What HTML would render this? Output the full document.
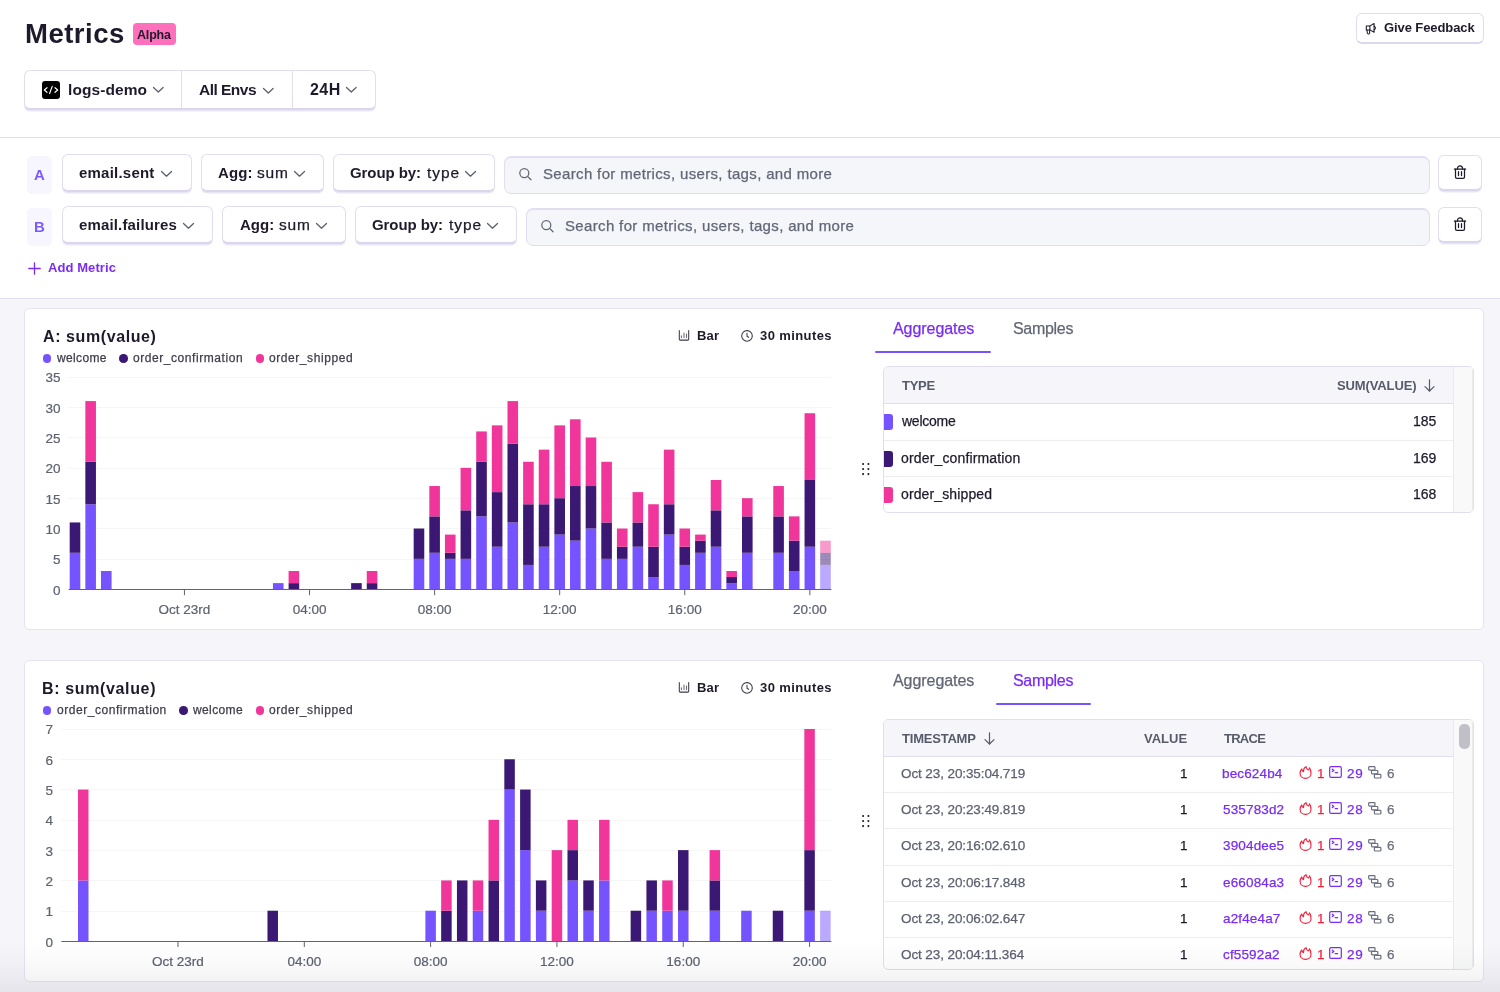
<!DOCTYPE html><html><head><meta charset="utf-8"><style>
*{box-sizing:border-box;margin:0;padding:0}
html,body{width:1500px;height:992px;overflow:hidden;background:#fff;font-family:"Liberation Sans",sans-serif;color:#2b2233}
.t{position:absolute;white-space:nowrap;will-change:transform}
.b{position:absolute}
.btn{position:absolute;background:#fff;border:1px solid #e2def0;border-bottom:2px solid #dcd6ec;border-radius:6px;box-shadow:0 1.5px 0 rgba(215,208,235,0.55)}
svg{position:absolute;overflow:visible}
</style></head><body><div class="t" style="left:24.75px;top:20px;font-size:27.5px;line-height:27.5px;font-weight:bold;color:#1e1a2b;letter-spacing:0.500px;">Metrics</div>
<div class="b" style="left:133px;top:23px;width:43px;height:22px;background:#ff70bc;border-radius:4px"></div>
<div class="t" style="left:137.15px;top:29px;font-size:12.5px;line-height:12.5px;font-weight:bold;color:#1e1a2b;letter-spacing:-0.181px;">Alpha</div>
<div class="b" style="left:1356px;top:13px;width:128px;height:31px;background:#fff;border:1px solid #e2def0;border-bottom:2px solid #dcd7ec;border-radius:6px"></div>
<svg style="left:1365px;top:22px" width="13" height="13" viewBox="0 0 13 13"><g fill="none" stroke="#1e1a2b" stroke-width="1.05" stroke-linejoin="round" stroke-linecap="round"><path d="M1.3 3.9 H4.9 V7.9 H1.3 Z"/><path d="M4.9 3.9 L9.1 1.5 V10.3 L4.9 7.9"/><path d="M9.1 4.2 Q11.8 6 9.1 7.8"/><path d="M1.9 7.9 L2.4 11.4 Q2.6 11.9 3.1 11.9 H3.9 Q4.6 11.9 4.6 11.3 L4.6 7.9"/></g></svg>
<div class="t" style="left:1384.00px;top:21px;font-size:13px;line-height:13px;font-weight:bold;color:#1e1a2b;letter-spacing:-0.087px;">Give Feedback</div>
<div class="btn" style="left:24px;top:70px;width:352px;height:40px"></div>
<div class="b" style="left:181px;top:71px;width:1px;height:37px;background:#e2def0"></div>
<div class="b" style="left:292px;top:71px;width:1px;height:37px;background:#e2def0"></div>
<svg style="left:42px;top:81px" width="18" height="18" viewBox="0 0 18 18"><rect x="0" y="0" width="18" height="18" rx="3" fill="#000"/><g fill="none" stroke="#fff" stroke-width="1.15" stroke-linecap="round" stroke-linejoin="round"><path d="M5 6.7 L2.3 9 L5 11.3"/><path d="M13 6.7 L15.7 9 L13 11.3"/><path d="M10.2 5.4 L7.6 12.5"/></g></svg>
<div class="t" style="left:67.50px;top:82px;font-size:15.5px;line-height:15.5px;font-weight:bold;color:#1e1a2b;letter-spacing:0.081px;">logs-demo</div>
<svg style="left:152.5px;top:87.35px" width="10.6" height="5.3" viewBox="0 0 10.6 5.3"><path d="M0.5 0.5 L5.3 5.0 L10.1 0.5" fill="none" stroke="#5b5d6b" stroke-width="1.25" stroke-linecap="round" stroke-linejoin="round"/></svg>
<div class="t" style="left:199.12px;top:82px;font-size:15.5px;line-height:15.5px;font-weight:bold;color:#1e1a2b;letter-spacing:-0.518px;">All Envs</div>
<svg style="left:263px;top:87.55px" width="10.6" height="5.3" viewBox="0 0 10.6 5.3"><path d="M0.5 0.5 L5.3 5.0 L10.1 0.5" fill="none" stroke="#5b5d6b" stroke-width="1.25" stroke-linecap="round" stroke-linejoin="round"/></svg>
<div class="t" style="left:309.50px;top:82px;font-size:16px;line-height:16px;font-weight:bold;color:#1e1a2b;letter-spacing:0.475px;">24H</div>
<svg style="left:346px;top:87.35px" width="10.6" height="5.3" viewBox="0 0 10.6 5.3"><path d="M0.5 0.5 L5.3 5.0 L10.1 0.5" fill="none" stroke="#5b5d6b" stroke-width="1.25" stroke-linecap="round" stroke-linejoin="round"/></svg>
<div class="b" style="left:0;top:137px;width:1500px;height:1px;background:#e2def0"></div>
<div class="b" style="left:27px;top:156px;width:25px;height:38px;background:#f7f5fd;border-radius:5px"></div>
<div class="t" style="left:34.33px;top:167px;font-size:15px;line-height:15px;font-weight:bold;color:#7b5cfa;letter-spacing:0.000px;">A</div>
<div class="btn" style="left:62px;top:154px;width:130px;height:38px"></div>
<div class="t" style="left:78.80px;top:165px;font-size:15px;line-height:15px;font-weight:bold;color:#1e1a2b;letter-spacing:0.217px;">email.sent</div>
<svg style="left:161px;top:170.75px" width="11" height="5.5" viewBox="0 0 11 5.5"><path d="M0.5 0.5 L5.5 5.2 L10.5 0.5" fill="none" stroke="#5b5d6b" stroke-width="1.25" stroke-linecap="round" stroke-linejoin="round"/></svg>
<div class="btn" style="left:201px;top:154px;width:123px;height:38px"></div>
<div class="t" style="left:217.53px;top:165px;font-size:15px;line-height:15px;font-weight:bold;color:#1e1a2b;letter-spacing:0.075px;">Agg:</div>
<div class="t" style="left:257.23px;top:165px;font-size:15.5px;line-height:15.5px;-webkit-text-stroke:0.25px #1e1a2b;color:#1e1a2b;letter-spacing:0.762px;">sum</div>
<svg style="left:294px;top:170.75px" width="11" height="5.5" viewBox="0 0 11 5.5"><path d="M0.5 0.5 L5.5 5.2 L10.5 0.5" fill="none" stroke="#5b5d6b" stroke-width="1.25" stroke-linecap="round" stroke-linejoin="round"/></svg>
<div class="btn" style="left:333px;top:154px;width:162px;height:38px"></div>
<div class="t" style="left:349.88px;top:165px;font-size:15px;line-height:15px;font-weight:bold;color:#1e1a2b;letter-spacing:-0.078px;">Group by:</div>
<div class="t" style="left:426.75px;top:165px;font-size:15.5px;line-height:15.5px;-webkit-text-stroke:0.25px #1e1a2b;color:#1e1a2b;letter-spacing:0.975px;">type</div>
<svg style="left:465.3px;top:170.75px" width="11" height="5.5" viewBox="0 0 11 5.5"><path d="M0.5 0.5 L5.5 5.2 L10.5 0.5" fill="none" stroke="#5b5d6b" stroke-width="1.25" stroke-linecap="round" stroke-linejoin="round"/></svg>
<div class="b" style="left:504px;top:156px;width:926px;height:38px;background:#f5f6fa;border:1px solid #e2def0;border-radius:7px;box-shadow:inset 0 1px 0 rgba(200,190,235,0.45)"></div>
<svg style="left:519px;top:168px" width="14" height="14" viewBox="0 0 14 14"><g fill="none" stroke="#626675" stroke-width="1.25" stroke-linecap="round"><circle cx="5.3" cy="5.1" r="4.5"/><path d="M8.6 8.4 L12 11.8"/></g></svg>
<div class="t" style="left:543.38px;top:166px;font-size:15px;line-height:15px;-webkit-text-stroke:0.25px #626675;color:#626675;letter-spacing:0.346px;">Search for metrics, users, tags, and more</div>
<div class="btn" style="left:1438px;top:155px;width:44px;height:35.5px"></div>
<svg style="left:1453px;top:164px" width="14" height="15" viewBox="0 0 14 15"><g fill="none" stroke="#1e1a2b" stroke-width="1.25" stroke-linecap="round" stroke-linejoin="round"><path d="M1.3 5 H12.7"/><path d="M4.4 5 C4.4 0.9 9.6 0.9 9.6 5"/><path d="M2.5 5 V12.9 Q2.5 14.3 3.9 14.3 H10.1 Q11.5 14.3 11.5 12.9 V5"/><path d="M5.5 7.7 V11.5 M8.5 7.7 V11.5"/></g></svg>
<div class="b" style="left:27px;top:208px;width:25px;height:38px;background:#f7f5fd;border-radius:5px"></div>
<div class="t" style="left:33.70px;top:219px;font-size:15px;line-height:15px;font-weight:bold;color:#7b5cfa;letter-spacing:0.000px;">B</div>
<div class="btn" style="left:62px;top:206px;width:151px;height:38px"></div>
<div class="t" style="left:78.80px;top:217px;font-size:15px;line-height:15px;font-weight:bold;color:#1e1a2b;letter-spacing:0.150px;">email.failures</div>
<svg style="left:183px;top:222.75px" width="11" height="5.5" viewBox="0 0 11 5.5"><path d="M0.5 0.5 L5.5 5.2 L10.5 0.5" fill="none" stroke="#5b5d6b" stroke-width="1.25" stroke-linecap="round" stroke-linejoin="round"/></svg>
<div class="btn" style="left:222px;top:206px;width:124px;height:38px"></div>
<div class="t" style="left:239.62px;top:217px;font-size:15px;line-height:15px;font-weight:bold;color:#1e1a2b;letter-spacing:0.042px;">Agg:</div>
<div class="t" style="left:279.23px;top:217px;font-size:15.5px;line-height:15.5px;-webkit-text-stroke:0.25px #1e1a2b;color:#1e1a2b;letter-spacing:0.762px;">sum</div>
<svg style="left:316px;top:222.75px" width="11" height="5.5" viewBox="0 0 11 5.5"><path d="M0.5 0.5 L5.5 5.2 L10.5 0.5" fill="none" stroke="#5b5d6b" stroke-width="1.25" stroke-linecap="round" stroke-linejoin="round"/></svg>
<div class="btn" style="left:355px;top:206px;width:162px;height:38px"></div>
<div class="t" style="left:371.88px;top:217px;font-size:15px;line-height:15px;font-weight:bold;color:#1e1a2b;letter-spacing:-0.078px;">Group by:</div>
<div class="t" style="left:448.75px;top:217px;font-size:15.5px;line-height:15.5px;-webkit-text-stroke:0.25px #1e1a2b;color:#1e1a2b;letter-spacing:0.975px;">type</div>
<svg style="left:487.3px;top:222.75px" width="11" height="5.5" viewBox="0 0 11 5.5"><path d="M0.5 0.5 L5.5 5.2 L10.5 0.5" fill="none" stroke="#5b5d6b" stroke-width="1.25" stroke-linecap="round" stroke-linejoin="round"/></svg>
<div class="b" style="left:526px;top:208px;width:904px;height:38px;background:#f5f6fa;border:1px solid #e2def0;border-radius:7px;box-shadow:inset 0 1px 0 rgba(200,190,235,0.45)"></div>
<svg style="left:541px;top:220px" width="14" height="14" viewBox="0 0 14 14"><g fill="none" stroke="#626675" stroke-width="1.25" stroke-linecap="round"><circle cx="5.3" cy="5.1" r="4.5"/><path d="M8.6 8.4 L12 11.8"/></g></svg>
<div class="t" style="left:565.38px;top:218px;font-size:15px;line-height:15px;-webkit-text-stroke:0.25px #626675;color:#626675;letter-spacing:0.346px;">Search for metrics, users, tags, and more</div>
<div class="btn" style="left:1438px;top:207px;width:44px;height:35.5px"></div>
<svg style="left:1453px;top:216px" width="14" height="15" viewBox="0 0 14 15"><g fill="none" stroke="#1e1a2b" stroke-width="1.25" stroke-linecap="round" stroke-linejoin="round"><path d="M1.3 5 H12.7"/><path d="M4.4 5 C4.4 0.9 9.6 0.9 9.6 5"/><path d="M2.5 5 V12.9 Q2.5 14.3 3.9 14.3 H10.1 Q11.5 14.3 11.5 12.9 V5"/><path d="M5.5 7.7 V11.5 M8.5 7.7 V11.5"/></g></svg>
<svg style="left:28px;top:261.5px" width="13" height="13" viewBox="0 0 13 13"><path d="M6.5 0.8 V12.2 M0.8 6.5 H12.2" stroke="#7a2cf2" stroke-width="1.3" stroke-linecap="round"/></svg>
<div class="t" style="left:48.12px;top:261px;font-size:13px;line-height:13px;font-weight:bold;color:#7a2cf2;letter-spacing:0.078px;">Add Metric</div>
<div class="b" style="left:0;top:298px;width:1500px;height:1px;background:#e2def0"></div>
<div class="b" style="left:0;top:299px;width:1500px;height:693px;background:#f6f5fa"></div>
<div class="b" style="left:24px;top:308px;width:1460px;height:322px;background:#fff;border:1px solid #e6e3f1;border-radius:5px"></div>
<div class="t" style="left:42.52px;top:329px;font-size:16px;line-height:16px;font-weight:bold;color:#1e1a2b;letter-spacing:0.587px;">A: sum(value)</div>
<div class="b" style="left:42.9px;top:354px;width:8.6px;height:8.6px;border-radius:50%;background:#7553ff"></div>
<div class="t" style="left:57.00px;top:352px;font-size:12px;line-height:12px;-webkit-text-stroke:0.25px #3f3d4b;color:#3f3d4b;letter-spacing:0.358px;">welcome</div>
<div class="b" style="left:119.4px;top:354px;width:8.6px;height:8.6px;border-radius:50%;background:#3a1873"></div>
<div class="t" style="left:133.00px;top:352px;font-size:12px;line-height:12px;-webkit-text-stroke:0.25px #3f3d4b;color:#3f3d4b;letter-spacing:0.562px;">order_confirmation</div>
<div class="b" style="left:255.6px;top:354px;width:8.6px;height:8.6px;border-radius:50%;background:#f0369a"></div>
<div class="t" style="left:268.90px;top:352px;font-size:12px;line-height:12px;-webkit-text-stroke:0.25px #3f3d4b;color:#3f3d4b;letter-spacing:0.569px;">order_shipped</div>
<svg style="left:678px;top:330px" width="12" height="11" viewBox="0 0 12 11"><g fill="none" stroke="#3b3847" stroke-width="1.05" stroke-linecap="round" stroke-linejoin="round"><path d="M1.3 0.5 V9.3 Q1.3 10.1 2.1 10.1 H9.9 Q10.7 10.1 10.7 9.3 V0.5"/><path d="M3.4 5.8 V7.6 M6 2.9 V7.6 M8.5 4.1 V7.6" stroke="#6b6a78"/></g></svg>
<div class="t" style="left:696.92px;top:329px;font-size:13px;line-height:13px;font-weight:bold;color:#1e1a2b;letter-spacing:0.138px;">Bar</div>
<svg style="left:741px;top:329.5px" width="12" height="12" viewBox="0 0 12 12"><g fill="none" stroke="#3b3847" stroke-width="1.05" stroke-linecap="round" stroke-linejoin="round"><circle cx="6" cy="5.9" r="5.3"/><path d="M6 3.2 V6.2 L7.6 7.2"/></g></svg>
<div class="t" style="left:759.95px;top:329px;font-size:13px;line-height:13px;font-weight:bold;color:#1e1a2b;letter-spacing:0.397px;">30 minutes</div>
<svg style="left:0;top:0" width="1500" height="992" viewBox="0 0 1500 992"><text x="60.5" y="594.70" text-anchor="end" font-size="13.5" fill="#5d6170" stroke="#5d6170" stroke-width="0.2" font-family="Liberation Sans">0</text><line x1="68.7" x2="831.3" y1="559.50" y2="559.50" stroke="#f5f6f5" stroke-width="1"/><text x="60.5" y="564.36" text-anchor="end" font-size="13.5" fill="#5d6170" stroke="#5d6170" stroke-width="0.2" font-family="Liberation Sans">5</text><line x1="68.7" x2="831.3" y1="528.50" y2="528.50" stroke="#f5f6f5" stroke-width="1"/><text x="60.5" y="534.02" text-anchor="end" font-size="13.5" fill="#5d6170" stroke="#5d6170" stroke-width="0.2" font-family="Liberation Sans">10</text><line x1="68.7" x2="831.3" y1="498.50" y2="498.50" stroke="#f5f6f5" stroke-width="1"/><text x="60.5" y="503.68" text-anchor="end" font-size="13.5" fill="#5d6170" stroke="#5d6170" stroke-width="0.2" font-family="Liberation Sans">15</text><line x1="68.7" x2="831.3" y1="468.50" y2="468.50" stroke="#f5f6f5" stroke-width="1"/><text x="60.5" y="473.34" text-anchor="end" font-size="13.5" fill="#5d6170" stroke="#5d6170" stroke-width="0.2" font-family="Liberation Sans">20</text><line x1="68.7" x2="831.3" y1="437.50" y2="437.50" stroke="#f5f6f5" stroke-width="1"/><text x="60.5" y="443.00" text-anchor="end" font-size="13.5" fill="#5d6170" stroke="#5d6170" stroke-width="0.2" font-family="Liberation Sans">25</text><line x1="68.7" x2="831.3" y1="407.50" y2="407.50" stroke="#f5f6f5" stroke-width="1"/><text x="60.5" y="412.66" text-anchor="end" font-size="13.5" fill="#5d6170" stroke="#5d6170" stroke-width="0.2" font-family="Liberation Sans">30</text><line x1="68.7" x2="831.3" y1="377.50" y2="377.50" stroke="#f5f6f5" stroke-width="1"/><text x="60.5" y="382.32" text-anchor="end" font-size="13.5" fill="#5d6170" stroke="#5d6170" stroke-width="0.2" font-family="Liberation Sans">35</text><rect x="69.70" y="552.79" width="10.6" height="36.41" fill="#7553ff" fill-opacity="1"/><rect x="69.70" y="522.45" width="10.6" height="30.34" fill="#3a1873" fill-opacity="1"/><rect x="85.34" y="504.25" width="10.6" height="84.95" fill="#7553ff" fill-opacity="1"/><rect x="85.34" y="461.77" width="10.6" height="42.48" fill="#3a1873" fill-opacity="1"/><rect x="85.34" y="401.09" width="10.6" height="60.68" fill="#f0369a" fill-opacity="1"/><rect x="100.97" y="571.00" width="10.6" height="18.20" fill="#7553ff" fill-opacity="1"/><rect x="272.95" y="583.13" width="10.6" height="6.07" fill="#7553ff" fill-opacity="1"/><rect x="288.59" y="583.13" width="10.6" height="6.07" fill="#3a1873" fill-opacity="1"/><rect x="288.59" y="571.00" width="10.6" height="12.14" fill="#f0369a" fill-opacity="1"/><rect x="351.13" y="583.13" width="10.6" height="6.07" fill="#3a1873" fill-opacity="1"/><rect x="366.76" y="583.13" width="10.6" height="6.07" fill="#3a1873" fill-opacity="1"/><rect x="366.76" y="571.00" width="10.6" height="12.14" fill="#f0369a" fill-opacity="1"/><rect x="413.67" y="558.86" width="10.6" height="30.34" fill="#7553ff" fill-opacity="1"/><rect x="413.67" y="528.52" width="10.6" height="30.34" fill="#3a1873" fill-opacity="1"/><rect x="429.31" y="552.79" width="10.6" height="36.41" fill="#7553ff" fill-opacity="1"/><rect x="429.31" y="516.38" width="10.6" height="36.41" fill="#3a1873" fill-opacity="1"/><rect x="429.31" y="486.04" width="10.6" height="30.34" fill="#f0369a" fill-opacity="1"/><rect x="444.94" y="558.86" width="10.6" height="30.34" fill="#7553ff" fill-opacity="1"/><rect x="444.94" y="552.79" width="10.6" height="6.07" fill="#3a1873" fill-opacity="1"/><rect x="444.94" y="534.59" width="10.6" height="18.20" fill="#f0369a" fill-opacity="1"/><rect x="460.57" y="558.86" width="10.6" height="30.34" fill="#7553ff" fill-opacity="1"/><rect x="460.57" y="510.32" width="10.6" height="48.54" fill="#3a1873" fill-opacity="1"/><rect x="460.57" y="467.84" width="10.6" height="42.48" fill="#f0369a" fill-opacity="1"/><rect x="476.21" y="516.38" width="10.6" height="72.82" fill="#7553ff" fill-opacity="1"/><rect x="476.21" y="461.77" width="10.6" height="54.61" fill="#3a1873" fill-opacity="1"/><rect x="476.21" y="431.43" width="10.6" height="30.34" fill="#f0369a" fill-opacity="1"/><rect x="491.84" y="546.72" width="10.6" height="42.48" fill="#7553ff" fill-opacity="1"/><rect x="491.84" y="492.11" width="10.6" height="54.61" fill="#3a1873" fill-opacity="1"/><rect x="491.84" y="425.36" width="10.6" height="66.75" fill="#f0369a" fill-opacity="1"/><rect x="507.48" y="522.45" width="10.6" height="66.75" fill="#7553ff" fill-opacity="1"/><rect x="507.48" y="443.57" width="10.6" height="78.88" fill="#3a1873" fill-opacity="1"/><rect x="507.48" y="401.09" width="10.6" height="42.48" fill="#f0369a" fill-opacity="1"/><rect x="523.12" y="564.93" width="10.6" height="24.27" fill="#7553ff" fill-opacity="1"/><rect x="523.12" y="504.25" width="10.6" height="60.68" fill="#3a1873" fill-opacity="1"/><rect x="523.12" y="461.77" width="10.6" height="42.48" fill="#f0369a" fill-opacity="1"/><rect x="538.75" y="546.72" width="10.6" height="42.48" fill="#7553ff" fill-opacity="1"/><rect x="538.75" y="504.25" width="10.6" height="42.48" fill="#3a1873" fill-opacity="1"/><rect x="538.75" y="449.64" width="10.6" height="54.61" fill="#f0369a" fill-opacity="1"/><rect x="554.38" y="534.59" width="10.6" height="54.61" fill="#7553ff" fill-opacity="1"/><rect x="554.38" y="498.18" width="10.6" height="36.41" fill="#3a1873" fill-opacity="1"/><rect x="554.38" y="425.36" width="10.6" height="72.82" fill="#f0369a" fill-opacity="1"/><rect x="570.02" y="540.66" width="10.6" height="48.54" fill="#7553ff" fill-opacity="1"/><rect x="570.02" y="486.04" width="10.6" height="54.61" fill="#3a1873" fill-opacity="1"/><rect x="570.02" y="419.30" width="10.6" height="66.75" fill="#f0369a" fill-opacity="1"/><rect x="585.66" y="528.52" width="10.6" height="60.68" fill="#7553ff" fill-opacity="1"/><rect x="585.66" y="486.04" width="10.6" height="42.48" fill="#3a1873" fill-opacity="1"/><rect x="585.66" y="437.50" width="10.6" height="48.54" fill="#f0369a" fill-opacity="1"/><rect x="601.29" y="558.86" width="10.6" height="30.34" fill="#7553ff" fill-opacity="1"/><rect x="601.29" y="522.45" width="10.6" height="36.41" fill="#3a1873" fill-opacity="1"/><rect x="601.29" y="461.77" width="10.6" height="60.68" fill="#f0369a" fill-opacity="1"/><rect x="616.93" y="558.86" width="10.6" height="30.34" fill="#7553ff" fill-opacity="1"/><rect x="616.93" y="546.72" width="10.6" height="12.14" fill="#3a1873" fill-opacity="1"/><rect x="616.93" y="528.52" width="10.6" height="18.20" fill="#f0369a" fill-opacity="1"/><rect x="632.56" y="546.72" width="10.6" height="42.48" fill="#7553ff" fill-opacity="1"/><rect x="632.56" y="522.45" width="10.6" height="24.27" fill="#3a1873" fill-opacity="1"/><rect x="632.56" y="492.11" width="10.6" height="30.34" fill="#f0369a" fill-opacity="1"/><rect x="648.20" y="577.06" width="10.6" height="12.14" fill="#7553ff" fill-opacity="1"/><rect x="648.20" y="546.72" width="10.6" height="30.34" fill="#3a1873" fill-opacity="1"/><rect x="648.20" y="504.25" width="10.6" height="42.48" fill="#f0369a" fill-opacity="1"/><rect x="663.83" y="534.59" width="10.6" height="54.61" fill="#7553ff" fill-opacity="1"/><rect x="663.83" y="504.25" width="10.6" height="30.34" fill="#3a1873" fill-opacity="1"/><rect x="663.83" y="449.64" width="10.6" height="54.61" fill="#f0369a" fill-opacity="1"/><rect x="679.47" y="564.93" width="10.6" height="24.27" fill="#7553ff" fill-opacity="1"/><rect x="679.47" y="546.72" width="10.6" height="18.20" fill="#3a1873" fill-opacity="1"/><rect x="679.47" y="528.52" width="10.6" height="18.20" fill="#f0369a" fill-opacity="1"/><rect x="695.10" y="552.79" width="10.6" height="36.41" fill="#7553ff" fill-opacity="1"/><rect x="695.10" y="540.66" width="10.6" height="12.14" fill="#3a1873" fill-opacity="1"/><rect x="695.10" y="534.59" width="10.6" height="6.07" fill="#f0369a" fill-opacity="1"/><rect x="710.74" y="546.72" width="10.6" height="42.48" fill="#7553ff" fill-opacity="1"/><rect x="710.74" y="510.32" width="10.6" height="36.41" fill="#3a1873" fill-opacity="1"/><rect x="710.74" y="479.98" width="10.6" height="30.34" fill="#f0369a" fill-opacity="1"/><rect x="726.37" y="583.13" width="10.6" height="6.07" fill="#7553ff" fill-opacity="1"/><rect x="726.37" y="577.06" width="10.6" height="6.07" fill="#3a1873" fill-opacity="1"/><rect x="726.37" y="571.00" width="10.6" height="6.07" fill="#f0369a" fill-opacity="1"/><rect x="742.00" y="552.79" width="10.6" height="36.41" fill="#7553ff" fill-opacity="1"/><rect x="742.00" y="516.38" width="10.6" height="36.41" fill="#3a1873" fill-opacity="1"/><rect x="742.00" y="498.18" width="10.6" height="18.20" fill="#f0369a" fill-opacity="1"/><rect x="773.28" y="552.79" width="10.6" height="36.41" fill="#7553ff" fill-opacity="1"/><rect x="773.28" y="516.38" width="10.6" height="36.41" fill="#3a1873" fill-opacity="1"/><rect x="773.28" y="486.04" width="10.6" height="30.34" fill="#f0369a" fill-opacity="1"/><rect x="788.91" y="571.00" width="10.6" height="18.20" fill="#7553ff" fill-opacity="1"/><rect x="788.91" y="540.66" width="10.6" height="30.34" fill="#3a1873" fill-opacity="1"/><rect x="788.91" y="516.38" width="10.6" height="24.27" fill="#f0369a" fill-opacity="1"/><rect x="804.55" y="546.72" width="10.6" height="42.48" fill="#7553ff" fill-opacity="1"/><rect x="804.55" y="479.98" width="10.6" height="66.75" fill="#3a1873" fill-opacity="1"/><rect x="804.55" y="413.23" width="10.6" height="66.75" fill="#f0369a" fill-opacity="1"/><rect x="820.18" y="564.93" width="10.6" height="24.27" fill="#7553ff" fill-opacity="0.5"/><rect x="820.18" y="552.79" width="10.6" height="12.14" fill="#3a1873" fill-opacity="0.5"/><rect x="820.18" y="540.66" width="10.6" height="12.14" fill="#f0369a" fill-opacity="0.5"/><line x1="68.7" x2="831.3" y1="589.50" y2="589.50" stroke="#5f6372" stroke-width="1"/><line x1="184.44" x2="184.44" y1="589.20" y2="595.20" stroke="#5f6372" stroke-width="1"/><text x="184.44" y="613.70" text-anchor="middle" font-size="13.5" fill="#5d6170" stroke="#5d6170" stroke-width="0.2" font-family="Liberation Sans">Oct 23rd</text><line x1="309.53" x2="309.53" y1="589.20" y2="595.20" stroke="#5f6372" stroke-width="1"/><text x="309.53" y="613.70" text-anchor="middle" font-size="13.5" fill="#5d6170" stroke="#5d6170" stroke-width="0.2" font-family="Liberation Sans">04:00</text><line x1="434.61" x2="434.61" y1="589.20" y2="595.20" stroke="#5f6372" stroke-width="1"/><text x="434.61" y="613.70" text-anchor="middle" font-size="13.5" fill="#5d6170" stroke="#5d6170" stroke-width="0.2" font-family="Liberation Sans">08:00</text><line x1="559.68" x2="559.68" y1="589.20" y2="595.20" stroke="#5f6372" stroke-width="1"/><text x="559.68" y="613.70" text-anchor="middle" font-size="13.5" fill="#5d6170" stroke="#5d6170" stroke-width="0.2" font-family="Liberation Sans">12:00</text><line x1="684.76" x2="684.76" y1="589.20" y2="595.20" stroke="#5f6372" stroke-width="1"/><text x="684.76" y="613.70" text-anchor="middle" font-size="13.5" fill="#5d6170" stroke="#5d6170" stroke-width="0.2" font-family="Liberation Sans">16:00</text><line x1="809.85" x2="809.85" y1="589.20" y2="595.20" stroke="#5f6372" stroke-width="1"/><text x="809.85" y="613.70" text-anchor="middle" font-size="13.5" fill="#5d6170" stroke="#5d6170" stroke-width="0.2" font-family="Liberation Sans">20:00</text></svg>
<svg style="left:0;top:0" width="1500" height="992"><circle cx="863.1" cy="464.0" r="1.05" fill="#1e1a2b"/><circle cx="863.1" cy="469.05" r="1.05" fill="#1e1a2b"/><circle cx="863.1" cy="474.1" r="1.05" fill="#1e1a2b"/><circle cx="868.4" cy="464.0" r="1.05" fill="#1e1a2b"/><circle cx="868.4" cy="469.05" r="1.05" fill="#1e1a2b"/><circle cx="868.4" cy="474.1" r="1.05" fill="#1e1a2b"/></svg>
<div class="t" style="left:892.50px;top:321px;font-size:16px;line-height:16px;-webkit-text-stroke:0.25px #7a2cf2;color:#7a2cf2;letter-spacing:-0.064px;">Aggregates</div>
<div class="t" style="left:1012.55px;top:321px;font-size:16px;line-height:16px;-webkit-text-stroke:0.25px #626675;color:#626675;letter-spacing:-0.300px;">Samples</div>
<div class="b" style="left:875px;top:350.8px;width:116px;height:2.4px;border-radius:1px;background:#7553ff"></div>
<div class="b" style="left:883px;top:366px;width:591px;height:147px;border:1px solid #e2def0;border-radius:5px;background:#fff;overflow:hidden"><div class="b" style="left:0;top:0;width:589px;height:37px;background:#f6f5fa;border-bottom:1px solid #e2def0"></div><div class="b" style="left:569px;top:0;width:20px;height:147px;background:#f8f9f8;border-left:1.5px solid #ebebee;border-right:1px solid #ececef"></div></div>
<div class="t" style="left:902.27px;top:379px;font-size:13px;line-height:13px;font-weight:bold;color:#575b69;letter-spacing:-0.292px;">TYPE</div>
<div class="t" style="left:1336.92px;top:379px;font-size:13px;line-height:13px;font-weight:bold;color:#575b69;letter-spacing:-0.117px;">SUM(VALUE)</div>
<svg style="left:1423.7px;top:378.5px" width="11" height="13" viewBox="0 0 11 13"><g fill="none" stroke="#575b69" stroke-width="1.2" stroke-linecap="round" stroke-linejoin="round"><path d="M5.5 0.8 V12"/><path d="M1 7.6 L5.5 12 L10 7.6"/></g></svg>
<div class="b" style="left:884px;top:414.2px;width:9px;height:15.7px;border-radius:0 3px 3px 0;background:#7553ff"></div>
<div class="t" style="left:901.80px;top:414px;font-size:14px;line-height:14px;-webkit-text-stroke:0.25px #1e1a2b;color:#1e1a2b;letter-spacing:-0.242px;">welcome</div>
<div class="t" style="left:1412.62px;top:414px;font-size:14px;line-height:14px;-webkit-text-stroke:0.25px #1e1a2b;color:#1e1a2b;letter-spacing:0.000px;">185</div>
<div class="b" style="left:884px;top:440px;width:569px;height:1px;background:#f0ecf3"></div>
<div class="b" style="left:884px;top:451px;width:9px;height:15.7px;border-radius:0 3px 3px 0;background:#3a1873"></div>
<div class="t" style="left:901.30px;top:451px;font-size:14px;line-height:14px;-webkit-text-stroke:0.25px #1e1a2b;color:#1e1a2b;letter-spacing:0.154px;">order_confirmation</div>
<div class="t" style="left:1412.75px;top:451px;font-size:14px;line-height:14px;-webkit-text-stroke:0.25px #1e1a2b;color:#1e1a2b;letter-spacing:0.000px;">169</div>
<div class="b" style="left:884px;top:476px;width:569px;height:1px;background:#f0ecf3"></div>
<div class="b" style="left:884px;top:487px;width:9px;height:15.7px;border-radius:0 3px 3px 0;background:#f0369a"></div>
<div class="t" style="left:901.30px;top:487px;font-size:14px;line-height:14px;-webkit-text-stroke:0.25px #1e1a2b;color:#1e1a2b;letter-spacing:0.123px;">order_shipped</div>
<div class="t" style="left:1412.62px;top:487px;font-size:14px;line-height:14px;-webkit-text-stroke:0.25px #1e1a2b;color:#1e1a2b;letter-spacing:0.000px;">168</div>
<div class="b" style="left:24px;top:660px;width:1460px;height:322px;background:#fff;border:1px solid #e6e3f1;border-radius:5px"></div>
<div class="t" style="left:41.90px;top:681px;font-size:16px;line-height:16px;font-weight:bold;color:#1e1a2b;letter-spacing:0.640px;">B: sum(value)</div>
<div class="b" style="left:42.9px;top:706px;width:8.6px;height:8.6px;border-radius:50%;background:#7553ff"></div>
<div class="t" style="left:56.50px;top:704px;font-size:12px;line-height:12px;-webkit-text-stroke:0.25px #3f3d4b;color:#3f3d4b;letter-spacing:0.544px;">order_confirmation</div>
<div class="b" style="left:179px;top:706px;width:8.6px;height:8.6px;border-radius:50%;background:#3a1873"></div>
<div class="t" style="left:193.00px;top:704px;font-size:12px;line-height:12px;-webkit-text-stroke:0.25px #3f3d4b;color:#3f3d4b;letter-spacing:0.375px;">welcome</div>
<div class="b" style="left:255.6px;top:706px;width:8.6px;height:8.6px;border-radius:50%;background:#f0369a"></div>
<div class="t" style="left:268.90px;top:704px;font-size:12px;line-height:12px;-webkit-text-stroke:0.25px #3f3d4b;color:#3f3d4b;letter-spacing:0.569px;">order_shipped</div>
<svg style="left:678px;top:682px" width="12" height="11" viewBox="0 0 12 11"><g fill="none" stroke="#3b3847" stroke-width="1.05" stroke-linecap="round" stroke-linejoin="round"><path d="M1.3 0.5 V9.3 Q1.3 10.1 2.1 10.1 H9.9 Q10.7 10.1 10.7 9.3 V0.5"/><path d="M3.4 5.8 V7.6 M6 2.9 V7.6 M8.5 4.1 V7.6" stroke="#6b6a78"/></g></svg>
<div class="t" style="left:696.92px;top:681px;font-size:13px;line-height:13px;font-weight:bold;color:#1e1a2b;letter-spacing:0.138px;">Bar</div>
<svg style="left:741px;top:681.5px" width="12" height="12" viewBox="0 0 12 12"><g fill="none" stroke="#3b3847" stroke-width="1.05" stroke-linecap="round" stroke-linejoin="round"><circle cx="6" cy="5.9" r="5.3"/><path d="M6 3.2 V6.2 L7.6 7.2"/></g></svg>
<div class="t" style="left:759.95px;top:681px;font-size:13px;line-height:13px;font-weight:bold;color:#1e1a2b;letter-spacing:0.397px;">30 minutes</div>
<svg style="left:0;top:0" width="1500" height="992" viewBox="0 0 1500 992"><text x="53" y="946.50" text-anchor="end" font-size="13.5" fill="#5d6170" stroke="#5d6170" stroke-width="0.2" font-family="Liberation Sans">0</text><line x1="61.4" x2="831.3" y1="911.50" y2="911.50" stroke="#f5f6f5" stroke-width="1"/><text x="53" y="916.21" text-anchor="end" font-size="13.5" fill="#5d6170" stroke="#5d6170" stroke-width="0.2" font-family="Liberation Sans">1</text><line x1="61.4" x2="831.3" y1="880.50" y2="880.50" stroke="#f5f6f5" stroke-width="1"/><text x="53" y="885.92" text-anchor="end" font-size="13.5" fill="#5d6170" stroke="#5d6170" stroke-width="0.2" font-family="Liberation Sans">2</text><line x1="61.4" x2="831.3" y1="850.50" y2="850.50" stroke="#f5f6f5" stroke-width="1"/><text x="53" y="855.63" text-anchor="end" font-size="13.5" fill="#5d6170" stroke="#5d6170" stroke-width="0.2" font-family="Liberation Sans">3</text><line x1="61.4" x2="831.3" y1="820.50" y2="820.50" stroke="#f5f6f5" stroke-width="1"/><text x="53" y="825.34" text-anchor="end" font-size="13.5" fill="#5d6170" stroke="#5d6170" stroke-width="0.2" font-family="Liberation Sans">4</text><line x1="61.4" x2="831.3" y1="789.50" y2="789.50" stroke="#f5f6f5" stroke-width="1"/><text x="53" y="795.05" text-anchor="end" font-size="13.5" fill="#5d6170" stroke="#5d6170" stroke-width="0.2" font-family="Liberation Sans">5</text><line x1="61.4" x2="831.3" y1="759.50" y2="759.50" stroke="#f5f6f5" stroke-width="1"/><text x="53" y="764.76" text-anchor="end" font-size="13.5" fill="#5d6170" stroke="#5d6170" stroke-width="0.2" font-family="Liberation Sans">6</text><line x1="61.4" x2="831.3" y1="729.50" y2="729.50" stroke="#f5f6f5" stroke-width="1"/><text x="53" y="734.47" text-anchor="end" font-size="13.5" fill="#5d6170" stroke="#5d6170" stroke-width="0.2" font-family="Liberation Sans">7</text><rect x="77.99" y="880.42" width="10.5" height="60.58" fill="#7553ff" fill-opacity="1"/><rect x="77.99" y="789.55" width="10.5" height="90.87" fill="#f0369a" fill-opacity="1"/><rect x="267.47" y="910.71" width="10.5" height="30.29" fill="#3a1873" fill-opacity="1"/><rect x="425.37" y="910.71" width="10.5" height="30.29" fill="#7553ff" fill-opacity="1"/><rect x="441.16" y="910.71" width="10.5" height="30.29" fill="#3a1873" fill-opacity="1"/><rect x="441.16" y="880.42" width="10.5" height="30.29" fill="#f0369a" fill-opacity="1"/><rect x="456.95" y="880.42" width="10.5" height="60.58" fill="#3a1873" fill-opacity="1"/><rect x="472.74" y="910.71" width="10.5" height="30.29" fill="#7553ff" fill-opacity="1"/><rect x="472.74" y="880.42" width="10.5" height="30.29" fill="#f0369a" fill-opacity="1"/><rect x="488.53" y="880.42" width="10.5" height="60.58" fill="#3a1873" fill-opacity="1"/><rect x="488.53" y="819.84" width="10.5" height="60.58" fill="#f0369a" fill-opacity="1"/><rect x="504.32" y="789.55" width="10.5" height="151.45" fill="#7553ff" fill-opacity="1"/><rect x="504.32" y="759.26" width="10.5" height="30.29" fill="#3a1873" fill-opacity="1"/><rect x="520.11" y="850.13" width="10.5" height="90.87" fill="#7553ff" fill-opacity="1"/><rect x="520.11" y="789.55" width="10.5" height="60.58" fill="#3a1873" fill-opacity="1"/><rect x="535.90" y="910.71" width="10.5" height="30.29" fill="#7553ff" fill-opacity="1"/><rect x="535.90" y="880.42" width="10.5" height="30.29" fill="#3a1873" fill-opacity="1"/><rect x="551.69" y="850.13" width="10.5" height="90.87" fill="#f0369a" fill-opacity="1"/><rect x="567.48" y="880.42" width="10.5" height="60.58" fill="#7553ff" fill-opacity="1"/><rect x="567.48" y="850.13" width="10.5" height="30.29" fill="#3a1873" fill-opacity="1"/><rect x="567.48" y="819.84" width="10.5" height="30.29" fill="#f0369a" fill-opacity="1"/><rect x="583.27" y="910.71" width="10.5" height="30.29" fill="#7553ff" fill-opacity="1"/><rect x="583.27" y="880.42" width="10.5" height="30.29" fill="#3a1873" fill-opacity="1"/><rect x="599.06" y="880.42" width="10.5" height="60.58" fill="#7553ff" fill-opacity="1"/><rect x="599.06" y="819.84" width="10.5" height="60.58" fill="#f0369a" fill-opacity="1"/><rect x="630.64" y="910.71" width="10.5" height="30.29" fill="#3a1873" fill-opacity="1"/><rect x="646.43" y="910.71" width="10.5" height="30.29" fill="#7553ff" fill-opacity="1"/><rect x="646.43" y="880.42" width="10.5" height="30.29" fill="#3a1873" fill-opacity="1"/><rect x="662.22" y="910.71" width="10.5" height="30.29" fill="#7553ff" fill-opacity="1"/><rect x="662.22" y="880.42" width="10.5" height="30.29" fill="#f0369a" fill-opacity="1"/><rect x="678.01" y="910.71" width="10.5" height="30.29" fill="#7553ff" fill-opacity="1"/><rect x="678.01" y="850.13" width="10.5" height="60.58" fill="#3a1873" fill-opacity="1"/><rect x="709.59" y="910.71" width="10.5" height="30.29" fill="#7553ff" fill-opacity="1"/><rect x="709.59" y="880.42" width="10.5" height="30.29" fill="#3a1873" fill-opacity="1"/><rect x="709.59" y="850.13" width="10.5" height="30.29" fill="#f0369a" fill-opacity="1"/><rect x="741.17" y="910.71" width="10.5" height="30.29" fill="#7553ff" fill-opacity="1"/><rect x="772.75" y="910.71" width="10.5" height="30.29" fill="#3a1873" fill-opacity="1"/><rect x="804.33" y="910.71" width="10.5" height="30.29" fill="#7553ff" fill-opacity="1"/><rect x="804.33" y="850.13" width="10.5" height="60.58" fill="#3a1873" fill-opacity="1"/><rect x="804.33" y="728.97" width="10.5" height="121.16" fill="#f0369a" fill-opacity="1"/><rect x="820.12" y="910.71" width="10.5" height="30.29" fill="#7553ff" fill-opacity="0.5"/><line x1="61.4" x2="831.3" y1="941.50" y2="941.50" stroke="#5f6372" stroke-width="1"/><line x1="177.98" x2="177.98" y1="941.00" y2="947.00" stroke="#5f6372" stroke-width="1"/><text x="177.98" y="965.50" text-anchor="middle" font-size="13.5" fill="#5d6170" stroke="#5d6170" stroke-width="0.2" font-family="Liberation Sans">Oct 23rd</text><line x1="304.30" x2="304.30" y1="941.00" y2="947.00" stroke="#5f6372" stroke-width="1"/><text x="304.30" y="965.50" text-anchor="middle" font-size="13.5" fill="#5d6170" stroke="#5d6170" stroke-width="0.2" font-family="Liberation Sans">04:00</text><line x1="430.62" x2="430.62" y1="941.00" y2="947.00" stroke="#5f6372" stroke-width="1"/><text x="430.62" y="965.50" text-anchor="middle" font-size="13.5" fill="#5d6170" stroke="#5d6170" stroke-width="0.2" font-family="Liberation Sans">08:00</text><line x1="556.94" x2="556.94" y1="941.00" y2="947.00" stroke="#5f6372" stroke-width="1"/><text x="556.94" y="965.50" text-anchor="middle" font-size="13.5" fill="#5d6170" stroke="#5d6170" stroke-width="0.2" font-family="Liberation Sans">12:00</text><line x1="683.26" x2="683.26" y1="941.00" y2="947.00" stroke="#5f6372" stroke-width="1"/><text x="683.26" y="965.50" text-anchor="middle" font-size="13.5" fill="#5d6170" stroke="#5d6170" stroke-width="0.2" font-family="Liberation Sans">16:00</text><line x1="809.58" x2="809.58" y1="941.00" y2="947.00" stroke="#5f6372" stroke-width="1"/><text x="809.58" y="965.50" text-anchor="middle" font-size="13.5" fill="#5d6170" stroke="#5d6170" stroke-width="0.2" font-family="Liberation Sans">20:00</text></svg>
<svg style="left:0;top:0" width="1500" height="992"><circle cx="863.1" cy="816.0" r="1.05" fill="#1e1a2b"/><circle cx="863.1" cy="821.05" r="1.05" fill="#1e1a2b"/><circle cx="863.1" cy="826.1" r="1.05" fill="#1e1a2b"/><circle cx="868.4" cy="816.0" r="1.05" fill="#1e1a2b"/><circle cx="868.4" cy="821.05" r="1.05" fill="#1e1a2b"/><circle cx="868.4" cy="826.1" r="1.05" fill="#1e1a2b"/></svg>
<div class="t" style="left:892.50px;top:673px;font-size:16px;line-height:16px;-webkit-text-stroke:0.25px #626675;color:#626675;letter-spacing:-0.064px;">Aggregates</div>
<div class="t" style="left:1012.55px;top:673px;font-size:16px;line-height:16px;-webkit-text-stroke:0.25px #7a2cf2;color:#7a2cf2;letter-spacing:-0.300px;">Samples</div>
<div class="b" style="left:996px;top:702.8px;width:94.5px;height:2.4px;border-radius:1px;background:#7553ff"></div>
<div class="b" style="left:883px;top:719px;width:591px;height:251px;border:1px solid #e2def0;border-radius:5px;background:#fff;overflow:hidden"><div class="b" style="left:0;top:0;width:589px;height:37px;background:#f6f5fa;border-bottom:1px solid #e2def0"></div><div class="b" style="left:569px;top:0;width:20px;height:251px;background:#f8f9f8;border-left:1.5px solid #ebebee;border-right:1px solid #ececef"></div></div>
<div class="t" style="left:902.08px;top:732px;font-size:13px;line-height:13px;font-weight:bold;color:#575b69;letter-spacing:-0.213px;">TIMESTAMP</div>
<svg style="left:983.5px;top:731.5px" width="11" height="13" viewBox="0 0 11 13"><g fill="none" stroke="#575b69" stroke-width="1.2" stroke-linecap="round" stroke-linejoin="round"><path d="M5.5 0.8 V12"/><path d="M1 7.6 L5.5 12 L10 7.6"/></g></svg>
<div class="t" style="left:1144.28px;top:732px;font-size:13px;line-height:13px;font-weight:bold;color:#575b69;letter-spacing:0.000px;">VALUE</div>
<div class="t" style="left:1223.58px;top:732px;font-size:13px;line-height:13px;font-weight:bold;color:#575b69;letter-spacing:-0.738px;">TRACE</div>
<div class="b" style="left:1459px;top:724px;width:10.5px;height:25px;border-radius:5px;background:#c1c0c8"></div>
<div class="t" style="left:901.08px;top:767px;font-size:13.5px;line-height:13.5px;-webkit-text-stroke:0.25px #5d6170;color:#5d6170;letter-spacing:-0.100px;">Oct 23, 20:35:04.719</div>
<div class="t" style="left:1180.42px;top:767px;font-size:13.5px;line-height:13.5px;-webkit-text-stroke:0.25px #1e1a2b;color:#1e1a2b;letter-spacing:0.000px;">1</div>
<div class="t" style="left:1222.12px;top:767px;font-size:13.5px;line-height:13.5px;-webkit-text-stroke:0.25px #7a2cf2;color:#7a2cf2;letter-spacing:0.150px;">bec624b4</div>
<svg style="left:1299.3px;top:765.7px" width="13" height="13" viewBox="0 0 13 13"><path d="M6.5 12.3 C3.3 12.3 1.1 10.1 1.1 7.4 C1.1 5.4 1.9 3.9 2.7 3 C3 4.3 3.6 5.2 4.5 5.6 C4.4 3.4 5.3 1.5 7.1 0.7 C7.3 2.3 8.1 3.4 9.4 4 C9.9 3.3 10.3 2.6 10.5 1.9 C11.5 3.1 12 4.9 12 7.4 C12 10.1 9.7 12.3 6.5 12.3 Z" fill="none" stroke="#f5233d" stroke-width="1.15" stroke-linejoin="round"/></svg>
<div class="t" style="left:1317.00px;top:767px;font-size:13.5px;line-height:13.5px;-webkit-text-stroke:0.25px #f5233d;color:#f5233d;letter-spacing:0.000px;">1</div>
<svg style="left:1329px;top:766.0px" width="13" height="12" viewBox="0 0 13 12"><g fill="none" stroke="#7a2cf2" stroke-width="1.2" stroke-linecap="round" stroke-linejoin="round"><rect x="0.7" y="0.7" width="11.6" height="10.6" rx="1.4"/><path d="M3.3 3.2 L4.9 4.4 L3.3 5.6"/><path d="M6.2 6.6 H8.6"/></g></svg>
<div class="t" style="left:1346.78px;top:767px;font-size:13.5px;line-height:13.5px;-webkit-text-stroke:0.25px #7a2cf2;color:#7a2cf2;letter-spacing:0.750px;">29</div>
<svg style="left:1368px;top:766.2px" width="14" height="13" viewBox="0 0 14 13"><g fill="none" stroke="#6b6f7d" stroke-width="1.2" stroke-linejoin="round"><rect x="0.7" y="0.7" width="6.3" height="3.4" rx="0.8"/><rect x="3.5" y="4.5" width="6.3" height="3.4" rx="0.8"/><rect x="6.4" y="8.4" width="6.5" height="3.6" rx="0.8"/></g></svg>
<div class="t" style="left:1387.38px;top:767px;font-size:13.5px;line-height:13.5px;-webkit-text-stroke:0.25px #6b6f7d;color:#6b6f7d;letter-spacing:0.000px;">6</div>
<div class="b" style="left:884px;top:792px;width:569px;height:1px;background:#f0ecf3"></div>
<div class="t" style="left:901.08px;top:803px;font-size:13.5px;line-height:13.5px;-webkit-text-stroke:0.25px #5d6170;color:#5d6170;letter-spacing:-0.100px;">Oct 23, 20:23:49.819</div>
<div class="t" style="left:1180.42px;top:803px;font-size:13.5px;line-height:13.5px;-webkit-text-stroke:0.25px #1e1a2b;color:#1e1a2b;letter-spacing:0.000px;">1</div>
<div class="t" style="left:1222.50px;top:803px;font-size:13.5px;line-height:13.5px;-webkit-text-stroke:0.25px #7a2cf2;color:#7a2cf2;letter-spacing:0.150px;">535783d2</div>
<svg style="left:1299.3px;top:801.9000000000001px" width="13" height="13" viewBox="0 0 13 13"><path d="M6.5 12.3 C3.3 12.3 1.1 10.1 1.1 7.4 C1.1 5.4 1.9 3.9 2.7 3 C3 4.3 3.6 5.2 4.5 5.6 C4.4 3.4 5.3 1.5 7.1 0.7 C7.3 2.3 8.1 3.4 9.4 4 C9.9 3.3 10.3 2.6 10.5 1.9 C11.5 3.1 12 4.9 12 7.4 C12 10.1 9.7 12.3 6.5 12.3 Z" fill="none" stroke="#f5233d" stroke-width="1.15" stroke-linejoin="round"/></svg>
<div class="t" style="left:1317.00px;top:803px;font-size:13.5px;line-height:13.5px;-webkit-text-stroke:0.25px #f5233d;color:#f5233d;letter-spacing:0.000px;">1</div>
<svg style="left:1329px;top:802.2px" width="13" height="12" viewBox="0 0 13 12"><g fill="none" stroke="#7a2cf2" stroke-width="1.2" stroke-linecap="round" stroke-linejoin="round"><rect x="0.7" y="0.7" width="11.6" height="10.6" rx="1.4"/><path d="M3.3 3.2 L4.9 4.4 L3.3 5.6"/><path d="M6.2 6.6 H8.6"/></g></svg>
<div class="t" style="left:1346.78px;top:803px;font-size:13.5px;line-height:13.5px;-webkit-text-stroke:0.25px #7a2cf2;color:#7a2cf2;letter-spacing:0.625px;">28</div>
<svg style="left:1368px;top:802.4000000000001px" width="14" height="13" viewBox="0 0 14 13"><g fill="none" stroke="#6b6f7d" stroke-width="1.2" stroke-linejoin="round"><rect x="0.7" y="0.7" width="6.3" height="3.4" rx="0.8"/><rect x="3.5" y="4.5" width="6.3" height="3.4" rx="0.8"/><rect x="6.4" y="8.4" width="6.5" height="3.6" rx="0.8"/></g></svg>
<div class="t" style="left:1387.38px;top:803px;font-size:13.5px;line-height:13.5px;-webkit-text-stroke:0.25px #6b6f7d;color:#6b6f7d;letter-spacing:0.000px;">6</div>
<div class="b" style="left:884px;top:828px;width:569px;height:1px;background:#f0ecf3"></div>
<div class="t" style="left:901.08px;top:839px;font-size:13.5px;line-height:13.5px;-webkit-text-stroke:0.25px #5d6170;color:#5d6170;letter-spacing:-0.100px;">Oct 23, 20:16:02.610</div>
<div class="t" style="left:1180.42px;top:839px;font-size:13.5px;line-height:13.5px;-webkit-text-stroke:0.25px #1e1a2b;color:#1e1a2b;letter-spacing:0.000px;">1</div>
<div class="t" style="left:1222.50px;top:839px;font-size:13.5px;line-height:13.5px;-webkit-text-stroke:0.25px #7a2cf2;color:#7a2cf2;letter-spacing:0.150px;">3904dee5</div>
<svg style="left:1299.3px;top:838.1px" width="13" height="13" viewBox="0 0 13 13"><path d="M6.5 12.3 C3.3 12.3 1.1 10.1 1.1 7.4 C1.1 5.4 1.9 3.9 2.7 3 C3 4.3 3.6 5.2 4.5 5.6 C4.4 3.4 5.3 1.5 7.1 0.7 C7.3 2.3 8.1 3.4 9.4 4 C9.9 3.3 10.3 2.6 10.5 1.9 C11.5 3.1 12 4.9 12 7.4 C12 10.1 9.7 12.3 6.5 12.3 Z" fill="none" stroke="#f5233d" stroke-width="1.15" stroke-linejoin="round"/></svg>
<div class="t" style="left:1317.00px;top:839px;font-size:13.5px;line-height:13.5px;-webkit-text-stroke:0.25px #f5233d;color:#f5233d;letter-spacing:0.000px;">1</div>
<svg style="left:1329px;top:838.4px" width="13" height="12" viewBox="0 0 13 12"><g fill="none" stroke="#7a2cf2" stroke-width="1.2" stroke-linecap="round" stroke-linejoin="round"><rect x="0.7" y="0.7" width="11.6" height="10.6" rx="1.4"/><path d="M3.3 3.2 L4.9 4.4 L3.3 5.6"/><path d="M6.2 6.6 H8.6"/></g></svg>
<div class="t" style="left:1346.78px;top:839px;font-size:13.5px;line-height:13.5px;-webkit-text-stroke:0.25px #7a2cf2;color:#7a2cf2;letter-spacing:0.750px;">29</div>
<svg style="left:1368px;top:838.6px" width="14" height="13" viewBox="0 0 14 13"><g fill="none" stroke="#6b6f7d" stroke-width="1.2" stroke-linejoin="round"><rect x="0.7" y="0.7" width="6.3" height="3.4" rx="0.8"/><rect x="3.5" y="4.5" width="6.3" height="3.4" rx="0.8"/><rect x="6.4" y="8.4" width="6.5" height="3.6" rx="0.8"/></g></svg>
<div class="t" style="left:1387.38px;top:839px;font-size:13.5px;line-height:13.5px;-webkit-text-stroke:0.25px #6b6f7d;color:#6b6f7d;letter-spacing:0.000px;">6</div>
<div class="b" style="left:884px;top:865px;width:569px;height:1px;background:#f0ecf3"></div>
<div class="t" style="left:901.08px;top:876px;font-size:13.5px;line-height:13.5px;-webkit-text-stroke:0.25px #5d6170;color:#5d6170;letter-spacing:-0.100px;">Oct 23, 20:06:17.848</div>
<div class="t" style="left:1180.42px;top:876px;font-size:13.5px;line-height:13.5px;-webkit-text-stroke:0.25px #1e1a2b;color:#1e1a2b;letter-spacing:0.000px;">1</div>
<div class="t" style="left:1222.50px;top:876px;font-size:13.5px;line-height:13.5px;-webkit-text-stroke:0.25px #7a2cf2;color:#7a2cf2;letter-spacing:0.150px;">e66084a3</div>
<svg style="left:1299.3px;top:874.3000000000001px" width="13" height="13" viewBox="0 0 13 13"><path d="M6.5 12.3 C3.3 12.3 1.1 10.1 1.1 7.4 C1.1 5.4 1.9 3.9 2.7 3 C3 4.3 3.6 5.2 4.5 5.6 C4.4 3.4 5.3 1.5 7.1 0.7 C7.3 2.3 8.1 3.4 9.4 4 C9.9 3.3 10.3 2.6 10.5 1.9 C11.5 3.1 12 4.9 12 7.4 C12 10.1 9.7 12.3 6.5 12.3 Z" fill="none" stroke="#f5233d" stroke-width="1.15" stroke-linejoin="round"/></svg>
<div class="t" style="left:1317.00px;top:876px;font-size:13.5px;line-height:13.5px;-webkit-text-stroke:0.25px #f5233d;color:#f5233d;letter-spacing:0.000px;">1</div>
<svg style="left:1329px;top:874.6px" width="13" height="12" viewBox="0 0 13 12"><g fill="none" stroke="#7a2cf2" stroke-width="1.2" stroke-linecap="round" stroke-linejoin="round"><rect x="0.7" y="0.7" width="11.6" height="10.6" rx="1.4"/><path d="M3.3 3.2 L4.9 4.4 L3.3 5.6"/><path d="M6.2 6.6 H8.6"/></g></svg>
<div class="t" style="left:1346.78px;top:876px;font-size:13.5px;line-height:13.5px;-webkit-text-stroke:0.25px #7a2cf2;color:#7a2cf2;letter-spacing:0.750px;">29</div>
<svg style="left:1368px;top:874.8000000000001px" width="14" height="13" viewBox="0 0 14 13"><g fill="none" stroke="#6b6f7d" stroke-width="1.2" stroke-linejoin="round"><rect x="0.7" y="0.7" width="6.3" height="3.4" rx="0.8"/><rect x="3.5" y="4.5" width="6.3" height="3.4" rx="0.8"/><rect x="6.4" y="8.4" width="6.5" height="3.6" rx="0.8"/></g></svg>
<div class="t" style="left:1387.38px;top:876px;font-size:13.5px;line-height:13.5px;-webkit-text-stroke:0.25px #6b6f7d;color:#6b6f7d;letter-spacing:0.000px;">6</div>
<div class="b" style="left:884px;top:901px;width:569px;height:1px;background:#f0ecf3"></div>
<div class="t" style="left:901.08px;top:912px;font-size:13.5px;line-height:13.5px;-webkit-text-stroke:0.25px #5d6170;color:#5d6170;letter-spacing:-0.100px;">Oct 23, 20:06:02.647</div>
<div class="t" style="left:1180.42px;top:912px;font-size:13.5px;line-height:13.5px;-webkit-text-stroke:0.25px #1e1a2b;color:#1e1a2b;letter-spacing:0.000px;">1</div>
<div class="t" style="left:1222.50px;top:912px;font-size:13.5px;line-height:13.5px;-webkit-text-stroke:0.25px #7a2cf2;color:#7a2cf2;letter-spacing:0.150px;">a2f4e4a7</div>
<svg style="left:1299.3px;top:910.5px" width="13" height="13" viewBox="0 0 13 13"><path d="M6.5 12.3 C3.3 12.3 1.1 10.1 1.1 7.4 C1.1 5.4 1.9 3.9 2.7 3 C3 4.3 3.6 5.2 4.5 5.6 C4.4 3.4 5.3 1.5 7.1 0.7 C7.3 2.3 8.1 3.4 9.4 4 C9.9 3.3 10.3 2.6 10.5 1.9 C11.5 3.1 12 4.9 12 7.4 C12 10.1 9.7 12.3 6.5 12.3 Z" fill="none" stroke="#f5233d" stroke-width="1.15" stroke-linejoin="round"/></svg>
<div class="t" style="left:1317.00px;top:912px;font-size:13.5px;line-height:13.5px;-webkit-text-stroke:0.25px #f5233d;color:#f5233d;letter-spacing:0.000px;">1</div>
<svg style="left:1329px;top:910.8px" width="13" height="12" viewBox="0 0 13 12"><g fill="none" stroke="#7a2cf2" stroke-width="1.2" stroke-linecap="round" stroke-linejoin="round"><rect x="0.7" y="0.7" width="11.6" height="10.6" rx="1.4"/><path d="M3.3 3.2 L4.9 4.4 L3.3 5.6"/><path d="M6.2 6.6 H8.6"/></g></svg>
<div class="t" style="left:1346.78px;top:912px;font-size:13.5px;line-height:13.5px;-webkit-text-stroke:0.25px #7a2cf2;color:#7a2cf2;letter-spacing:0.625px;">28</div>
<svg style="left:1368px;top:911.0px" width="14" height="13" viewBox="0 0 14 13"><g fill="none" stroke="#6b6f7d" stroke-width="1.2" stroke-linejoin="round"><rect x="0.7" y="0.7" width="6.3" height="3.4" rx="0.8"/><rect x="3.5" y="4.5" width="6.3" height="3.4" rx="0.8"/><rect x="6.4" y="8.4" width="6.5" height="3.6" rx="0.8"/></g></svg>
<div class="t" style="left:1387.38px;top:912px;font-size:13.5px;line-height:13.5px;-webkit-text-stroke:0.25px #6b6f7d;color:#6b6f7d;letter-spacing:0.000px;">6</div>
<div class="b" style="left:884px;top:937px;width:569px;height:1px;background:#f0ecf3"></div>
<div class="t" style="left:901.08px;top:948px;font-size:13.5px;line-height:13.5px;-webkit-text-stroke:0.25px #5d6170;color:#5d6170;letter-spacing:-0.100px;">Oct 23, 20:04:11.364</div>
<div class="t" style="left:1180.42px;top:948px;font-size:13.5px;line-height:13.5px;-webkit-text-stroke:0.25px #1e1a2b;color:#1e1a2b;letter-spacing:0.000px;">1</div>
<div class="t" style="left:1222.50px;top:948px;font-size:13.5px;line-height:13.5px;-webkit-text-stroke:0.25px #7a2cf2;color:#7a2cf2;letter-spacing:0.150px;">cf5592a2</div>
<svg style="left:1299.3px;top:946.7px" width="13" height="13" viewBox="0 0 13 13"><path d="M6.5 12.3 C3.3 12.3 1.1 10.1 1.1 7.4 C1.1 5.4 1.9 3.9 2.7 3 C3 4.3 3.6 5.2 4.5 5.6 C4.4 3.4 5.3 1.5 7.1 0.7 C7.3 2.3 8.1 3.4 9.4 4 C9.9 3.3 10.3 2.6 10.5 1.9 C11.5 3.1 12 4.9 12 7.4 C12 10.1 9.7 12.3 6.5 12.3 Z" fill="none" stroke="#f5233d" stroke-width="1.15" stroke-linejoin="round"/></svg>
<div class="t" style="left:1317.00px;top:948px;font-size:13.5px;line-height:13.5px;-webkit-text-stroke:0.25px #f5233d;color:#f5233d;letter-spacing:0.000px;">1</div>
<svg style="left:1329px;top:947.0px" width="13" height="12" viewBox="0 0 13 12"><g fill="none" stroke="#7a2cf2" stroke-width="1.2" stroke-linecap="round" stroke-linejoin="round"><rect x="0.7" y="0.7" width="11.6" height="10.6" rx="1.4"/><path d="M3.3 3.2 L4.9 4.4 L3.3 5.6"/><path d="M6.2 6.6 H8.6"/></g></svg>
<div class="t" style="left:1346.78px;top:948px;font-size:13.5px;line-height:13.5px;-webkit-text-stroke:0.25px #7a2cf2;color:#7a2cf2;letter-spacing:0.750px;">29</div>
<svg style="left:1368px;top:947.2px" width="14" height="13" viewBox="0 0 14 13"><g fill="none" stroke="#6b6f7d" stroke-width="1.2" stroke-linejoin="round"><rect x="0.7" y="0.7" width="6.3" height="3.4" rx="0.8"/><rect x="3.5" y="4.5" width="6.3" height="3.4" rx="0.8"/><rect x="6.4" y="8.4" width="6.5" height="3.6" rx="0.8"/></g></svg>
<div class="t" style="left:1387.38px;top:948px;font-size:13.5px;line-height:13.5px;-webkit-text-stroke:0.25px #6b6f7d;color:#6b6f7d;letter-spacing:0.000px;">6</div>
<div class="b" style="left:0;top:942px;width:1500px;height:50px;background:linear-gradient(to bottom, rgba(30,25,50,0) 0%, rgba(30,25,50,0.025) 45%, rgba(30,25,50,0.07) 100%)"></div></body></html>
